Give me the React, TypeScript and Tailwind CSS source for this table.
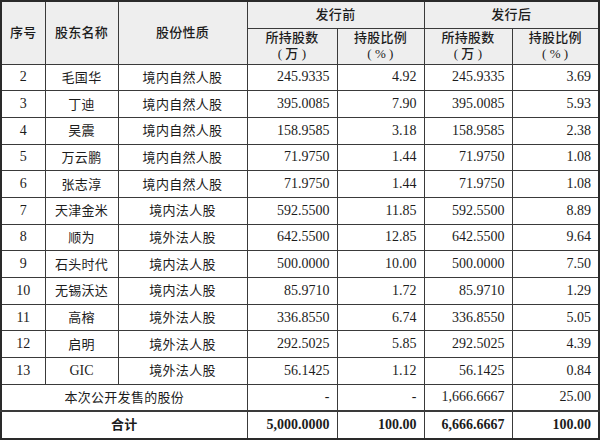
const rows = [
  ["2", "毛国华", "境内自然人股", "245.9335", "4.92", "245.9335", "3.69"],
  ["3", "丁迪", "境内自然人股", "395.0085", "7.90", "395.0085", "5.93"],
  ["4", "吴震", "境内自然人股", "158.9585", "3.18", "158.9585", "2.38"],
  ["5", "万云鹏", "境内自然人股", "71.9750", "1.44", "71.9750", "1.08"],
  ["6", "张志淳", "境内自然人股", "71.9750", "1.44", "71.9750", "1.08"],
  ["7", "天津金米", "境内法人股", "592.5500", "11.85", "592.5500", "8.89"],
  ["8", "顺为", "境外法人股", "642.5500", "12.85", "642.5500", "9.64"],
  ["9", "石头时代", "境内法人股", "500.0000", "10.00", "500.0000", "7.50"],
  ["10", "无锡沃达", "境内法人股", "85.9710", "1.72", "85.9710", "1.29"],
  ["11", "高榕", "境外法人股", "336.8550", "6.74", "336.8550", "5.05"],
  ["12", "启明", "境外法人股", "292.5025", "5.85", "292.5025", "4.39"],
  ["13", "GIC", "境外法人股", "56.1425", "1.12", "56.1425", "0.84"],
];

const cell = "border border-[#3a3a3a] p-0";
const num = `${cell} text-right pr-[7px]`;
const cjk = `${cell} text-center text-[13px] tracking-[0.3px]`;
const head = `${cell} bg-[#eeeeee] text-center text-[13px] tracking-[0.3px] font-medium`;

function Unit({ u }: { u: string }) {
  return (
    <>
      <span className="inline-block px-[3px]">(</span>
      {u}
      <span className="inline-block px-[3px]">)</span>
    </>
  );
}

export default function App() {
  return (
    <div
      className="w-[600px] h-[442px] bg-white text-[#1c1c1c] text-[14px]"
      style={{ fontFamily: '"Liberation Serif", "Noto Sans CJK SC", serif' }}
    >
      <table className="w-[598px] table-fixed border-collapse border-2 border-[#2a2a2a] leading-none">
        <colgroup>
          <col className="w-[44px]" />
          <col className="w-[73px]" />
          <col className="w-[129px]" />
          <col className="w-[90px]" />
          <col className="w-[87px]" />
          <col className="w-[88px]" />
          <col className="w-[87px]" />
        </colgroup>
        <thead>
          <tr className="h-[27px]">
            <th rowSpan={2} className={head}>序号</th>
            <th rowSpan={2} className={head}>股东名称</th>
            <th rowSpan={2} className={head}>股份性质</th>
            <th colSpan={2} className={head}>发行前</th>
            <th colSpan={2} className={head}>发行后</th>
          </tr>
          <tr className="h-[36px]">
            <th className={`${head} leading-[16px]`}>所持股数<br /><Unit u="万" /></th>
            <th className={`${head} leading-[16px]`}>持股比例<br /><Unit u="%" /></th>
            <th className={`${head} leading-[16px]`}>所持股数<br /><Unit u="万" /></th>
            <th className={`${head} leading-[16px]`}>持股比例<br /><Unit u="%" /></th>
          </tr>
        </thead>
        <tbody>
          {rows.map((r) => (
            <tr key={r[0]} className="h-[26.7px]">
              <td className={`${cell} text-center`}>{r[0]}</td>
              <td className={r[1] === "GIC" ? `${cell} text-center` : cjk}>{r[1]}</td>
              <td className={cjk}>{r[2]}</td>
              <td className={num}>{r[3]}</td>
              <td className={num}>{r[4]}</td>
              <td className={num}>{r[5]}</td>
              <td className={num}>{r[6]}</td>
            </tr>
          ))}
          <tr className="h-[26.7px]">
            <td colSpan={3} className={cjk}>本次公开发售的股份</td>
            <td className={num}>-</td>
            <td className={num}>-</td>
            <td className={num}>1,666.6667</td>
            <td className={num}>25.00</td>
          </tr>
          <tr className="h-[28px] font-bold">
            <td colSpan={3} className={`${cjk} border-t-2`}>合计</td>
            <td className={`${num} border-t-2`}>5,000.0000</td>
            <td className={`${num} border-t-2`}>100.00</td>
            <td className={`${num} border-t-2`}>6,666.6667</td>
            <td className={`${num} border-t-2`}>100.00</td>
          </tr>
        </tbody>
      </table>
    </div>
  );
}
